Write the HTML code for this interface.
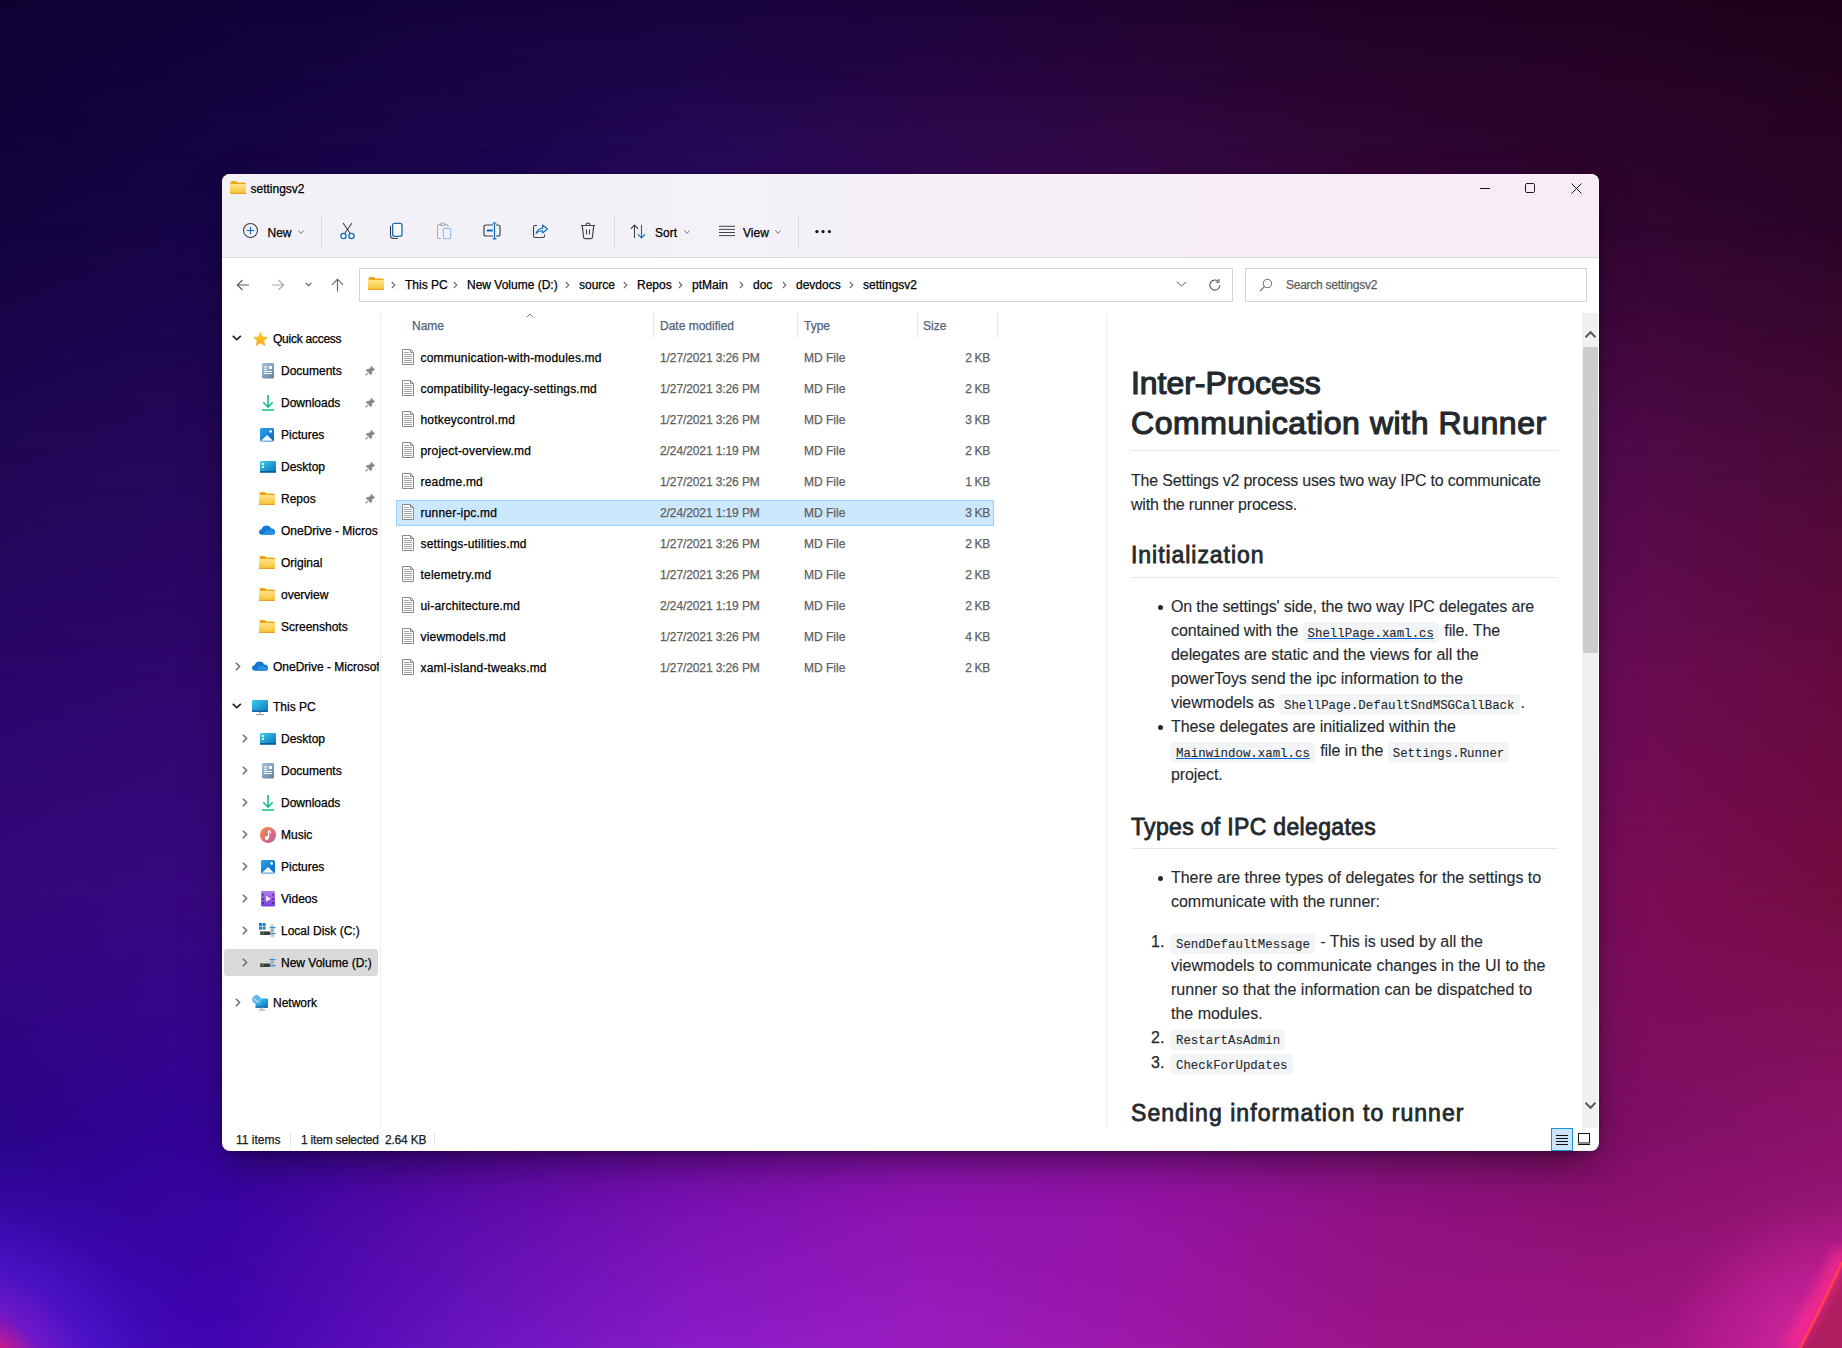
<!DOCTYPE html>
<html><head><meta charset="utf-8">
<style>
*{margin:0;padding:0;box-sizing:border-box}
html,body{width:1842px;height:1348px;overflow:hidden;background:#1a0440}
body{position:relative;font-family:"Liberation Sans",sans-serif;font-size:12px;color:#000}
.abs{position:absolute}
#bg{position:absolute;left:0;top:0;width:1842px;height:1348px;overflow:hidden}
.bgl{position:absolute;left:0;top:0;width:1842px;height:1348px}
#win{position:absolute;left:222px;top:174px;width:1377px;height:977px;border-radius:8px;overflow:hidden;background:#fff;box-shadow:0 1px 4px rgba(0,0,0,.25),0 18px 36px -8px rgba(0,0,0,.5)}
.t{position:absolute;white-space:nowrap;line-height:1;-webkit-text-stroke:0.25px currentColor}
svg{position:absolute;overflow:visible}
</style></head><body>
<div id="bg">
<div class="bgl" style="background:linear-gradient(90deg,#0e0232 0px,#110338 230px,#14043e 460px,#18043e 691px,#1c033a 921px,#1f0330 1151px,#200326 1382px,#210220 1612px,#20021c 1842px)"></div>
<div class="bgl" style="background:linear-gradient(90deg,#130440 0px,#17054a 230px,#1e0654 460px,#2a0a62 691px,#360a58 921px,#3c0a4c 1151px,#38063a 1382px,#320532 1612px,#2c0428 1842px);-webkit-mask-image:linear-gradient(180deg,transparent 0px,#000 225px);mask-image:linear-gradient(180deg,transparent 0px,#000 225px)"></div>
<div class="bgl" style="background:linear-gradient(90deg,#200654 0px,#26065c 230px,#2a0662 460px,#300a60 691px,#380a58 921px,#420a4e 1151px,#480a4a 1382px,#500a4c 1612px,#480a34 1842px);-webkit-mask-image:linear-gradient(180deg,transparent 225px,#000 449px);mask-image:linear-gradient(180deg,transparent 225px,#000 449px)"></div>
<div class="bgl" style="background:linear-gradient(90deg,#2a066a 0px,#30076e 230px,#34076e 460px,#3a086a 691px,#460a62 921px,#520c58 1151px,#5e0c58 1382px,#6a0c56 1612px,#640a3e 1842px);-webkit-mask-image:linear-gradient(180deg,transparent 449px,#000 674px);mask-image:linear-gradient(180deg,transparent 449px,#000 674px)"></div>
<div class="bgl" style="background:linear-gradient(90deg,#34087c 0px,#3a0882 230px,#3e0882 460px,#44087a 691px,#560a74 921px,#640c68 1151px,#720c60 1382px,#7c0c5a 1612px,#740c40 1842px);-webkit-mask-image:linear-gradient(180deg,transparent 674px,#000 899px);mask-image:linear-gradient(180deg,transparent 674px,#000 899px)"></div>
<div class="bgl" style="background:linear-gradient(90deg,#2c0488 0px,#34049a 230px,#52069c 460px,#700aa4 691px,#8810aa 921px,#8e10a0 1151px,#86107e 1382px,#7e0e64 1612px,#8a1268 1842px);-webkit-mask-image:linear-gradient(180deg,transparent 899px,#000 1123px);mask-image:linear-gradient(180deg,transparent 899px,#000 1123px)"></div>
<div class="bgl" style="background:linear-gradient(90deg,#3008b0 0px,#4404b0 230px,#6814c0 460px,#8a1cc8 691px,#9a1cc0 921px,#9c18a8 1151px,#9c1488 1382px,#a01484 1612px,#a81884 1842px);-webkit-mask-image:linear-gradient(180deg,transparent 1123px,#000 1348px);mask-image:linear-gradient(180deg,transparent 1123px,#000 1348px)"></div>
<div class="bgl" style="background:radial-gradient(circle at -40px 1400px,#f02070 0px,rgba(230,30,120,.9) 60px,rgba(140,30,210,.7) 95px,rgba(100,30,230,.45) 140px,rgba(90,20,220,.15) 200px,rgba(80,10,200,0) 260px)"></div>
<div class="bgl" style="background:radial-gradient(ellipse 180px 150px at 1842px 1348px,rgba(240,50,170,.8) 0%,rgba(220,40,170,.45) 50%,rgba(200,30,150,0) 100%)"></div>
<svg class="bgl" width="1842" height="1348" style="position:absolute;left:0;top:0"><defs><filter id="sb" x="-50%" y="-50%" width="200%" height="200%"><feGaussianBlur stdDeviation="6"/></filter></defs><path d="M1842 1262 Q1825 1300 1800 1348 L1842 1348 Z" fill="#b01e62"/><path d="M1842 1250 Q1822 1298 1790 1348" fill="none" stroke="#ff2a8a" stroke-width="14" filter="url(#sb)" opacity=".8"/><path d="M1842 1262 Q1825 1300 1800 1348" fill="none" stroke="#ff3a5c" stroke-width="3"/></svg>
</div>
<div id="win">
<div class="abs" style="left:0px;top:0px;width:1377px;height:83px;background:linear-gradient(90deg,#f3f1f8 0%,#f3f1f8 30%,#f5eff7 55%,#f7edf6 80%,#f8ecf6 100%)"></div>
<div class="abs" style="left:0px;top:83px;width:1377px;height:1px;background:#dedae2"></div>
<svg style="left:8px;top:7px" width="16" height="13" viewBox="0 0 16 13"><defs><linearGradient id="fg230181" x1="0" y1="0" x2="0" y2="1"><stop offset="0" stop-color="#ffe38a"/><stop offset="1" stop-color="#f8c233"/></linearGradient></defs>
<path d="M0.5 1.5 Q0.5 0 2 0 L6 0 L7.5 1.5 L14.5 1.5 Q16 1.5 16 3 L16 4 L0.5 4 Z" fill="#eaa71a"/>
<rect x="0" y="3" width="16" height="10" rx="1.2" fill="url(#fg230181)"/>
<rect x="0" y="11.8" width="16" height="1.2" rx="0.6" fill="#e6a41c"/></svg>
<div class="t" style="left:28.50px;top:9.34px;font-size:12px;color:#000;font-weight:normal;font-family:'Liberation Sans',sans-serif;">settingsv2</div>
<svg style="left:1257px;top:9px" width="120" height="12" viewBox="0 0 120 12"><line x1="1" y1="5.5" x2="11" y2="5.5" stroke="#1a1a1a" stroke-width="1"/>
<rect x="46.5" y="0.5" width="9" height="9" rx="1.2" fill="none" stroke="#1a1a1a" stroke-width="1"/>
<path d="M92.5 0.5 L102.5 10.5 M102.5 0.5 L92.5 10.5" stroke="#1a1a1a" stroke-width="1"/></svg>
<svg style="left:21px;top:49px" width="16" height="16" viewBox="0 0 16 16"><circle cx="7.5" cy="7.5" r="7" fill="none" stroke="#424242" stroke-width="1.1"/><path d="M7.5 3.8 V11.2 M3.8 7.5 H11.2" stroke="#0f6cbd" stroke-width="1.2"/></svg>
<div class="t" style="left:45.50px;top:52.84px;font-size:12px;color:#000;font-weight:normal;font-family:'Liberation Sans',sans-serif;">New</div>
<svg style="left:76px;top:55.5px" width="6" height="4" viewBox="0 0 6 4"><path d="M0.5 0.5 L3.0 3.5 L5.5 0.5" fill="none" stroke="#7a7a7a" stroke-width="1"/></svg>
<div class="abs" style="left:99px;top:41px;width:1px;height:32px;background:#dcd9e0"></div>
<svg style="left:118px;top:49px" width="16" height="17" viewBox="0 0 16 17"><path d="M3 0 L10 10 M12 0 L5 10" stroke="#424242" stroke-width="1.1" fill="none"/><circle cx="3.5" cy="13" r="2.6" fill="none" stroke="#0f6cbd" stroke-width="1.3"/><circle cx="11.5" cy="13" r="2.6" fill="none" stroke="#0f6cbd" stroke-width="1.3"/></svg>
<svg style="left:167px;top:48px" width="15" height="18" viewBox="0 0 15 18"><path d="M1.5 4 V13.5 Q1.5 16.5 4.5 16.5 H9" fill="none" stroke="#424242" stroke-width="1.1"/><rect x="3.6" y="1.3" width="9.4" height="13" rx="2" fill="#fafafa" stroke="#0f6cbd" stroke-width="1.3"/></svg>
<svg style="left:214px;top:48px" width="16" height="18" viewBox="0 0 16 18"><path d="M6 2.5 H3 Q1.5 2.5 1.5 4 V15 Q1.5 16.5 3 16.5 H5" fill="none" stroke="#a8a8a8" stroke-width="1"/><path d="M8 2.5 H10.5 Q12 2.5 12 4 V5" fill="none" stroke="#a8a8a8" stroke-width="1"/><rect x="4" y="1" width="5" height="2.6" rx="1.2" fill="none" stroke="#a8a8a8" stroke-width="1"/><rect x="7.3" y="6.4" width="7.4" height="10.4" rx="1.3" fill="none" stroke="#8cbef0" stroke-width="1.1"/></svg>
<svg style="left:261px;top:48px" width="19" height="18" viewBox="0 0 19 18"><path d="M10 3 H3 Q1 3 1 5 V12 Q1 14 3 14 H10 M13 3 H15 Q17 3 17 5 V12 Q17 14 15 14 H13" fill="none" stroke="#424242" stroke-width="1.2"/><path d="M3.8 8.5 H9.8" stroke="#0f6cbd" stroke-width="1.8"/><path d="M11.5 1 V16.8 M9.6 1 H13.4 M9.6 16.8 H13.4" stroke="#0f6cbd" stroke-width="1.2" fill="none"/></svg>
<svg style="left:310px;top:49px" width="17" height="16" viewBox="0 0 17 16"><path d="M5 2.5 H3 Q1.5 2.5 1.5 4 V13 Q1.5 14.5 3 14.5 H11 Q12.5 14.5 12.5 13 V11.5" fill="none" stroke="#424242" stroke-width="1.1"/><path d="M4 10.5 Q5.5 5.5 10.5 5.5 V2 L15.5 6 L10.5 10 V7.8 Q6.5 7.5 4 10.5 Z" fill="none" stroke="#0f6cbd" stroke-width="1.1" stroke-linejoin="round"/></svg>
<svg style="left:358px;top:48px" width="16" height="18" viewBox="0 0 16 18"><path d="M1 3.5 H15" stroke="#424242" stroke-width="1.2"/><path d="M6 3.2 Q6 1 8 1 Q10 1 10 3.2" fill="none" stroke="#424242" stroke-width="1.1"/><path d="M2.3 4 L3.5 15 Q3.7 16.7 5.3 16.7 H10.7 Q12.3 16.7 12.5 15 L13.7 4" fill="none" stroke="#424242" stroke-width="1.2"/><path d="M6.5 7.5 V12.5 M9.5 7.5 V12.5" stroke="#424242" stroke-width="1.1"/></svg>
<div class="abs" style="left:392px;top:41px;width:1px;height:32px;background:#dcd9e0"></div>
<svg style="left:408px;top:50px" width="18" height="15" viewBox="0 0 18 15"><path d="M4.5 14 V1 M0.8 4.8 L4.5 1 L8.2 4.8" fill="none" stroke="#424242" stroke-width="1.1"/><path d="M11.5 1 V14 M7.8 10.2 L11.5 14 L15.2 10.2" fill="none" stroke="#0f6cbd" stroke-width="1.1"/></svg>
<div class="t" style="left:433.00px;top:52.84px;font-size:12px;color:#000;font-weight:normal;font-family:'Liberation Sans',sans-serif;">Sort</div>
<svg style="left:462px;top:55.5px" width="6" height="4" viewBox="0 0 6 4"><path d="M0.5 0.5 L3.0 3.5 L5.5 0.5" fill="none" stroke="#7a7a7a" stroke-width="1"/></svg>
<svg style="left:497px;top:51px" width="17" height="12" viewBox="0 0 17 12"><path d="M0 1.3 H16 M0 4.4 H16 M0 7.5 H16 M0 10.6 H16" stroke="#424242" stroke-width="1"/></svg>
<div class="t" style="left:521.00px;top:52.84px;font-size:12px;color:#000;font-weight:normal;font-family:'Liberation Sans',sans-serif;">View</div>
<svg style="left:553px;top:55.5px" width="6" height="4" viewBox="0 0 6 4"><path d="M0.5 0.5 L3.0 3.5 L5.5 0.5" fill="none" stroke="#7a7a7a" stroke-width="1"/></svg>
<div class="abs" style="left:576px;top:41px;width:1px;height:32px;background:#dcd9e0"></div>
<svg style="left:592px;top:55px" width="18" height="5" viewBox="0 0 18 5"><circle cx="2.9" cy="2.6" r="1.6" fill="#111"/><circle cx="9" cy="2.6" r="1.6" fill="#111"/><circle cx="15.4" cy="2.6" r="1.6" fill="#111"/></svg>
<svg style="left:14px;top:105px" width="14" height="12" viewBox="0 0 14 12"><path d="M13 6 H1.5 M6.5 1 L1.3 6 L6.5 11" fill="none" stroke="#5c5c5c" stroke-width="1.1"/></svg>
<svg style="left:49px;top:105px" width="14" height="12" viewBox="0 0 14 12"><path d="M1 6 H12.5 M7.5 1 L12.7 6 L7.5 11" fill="none" stroke="#a6a6a6" stroke-width="1.1"/></svg>
<svg style="left:83px;top:108px" width="7" height="5" viewBox="0 0 7 5"><path d="M0.7 0.8 L3.5 3.6 L6.3 0.8" fill="none" stroke="#5c5c5c" stroke-width="1.1"/></svg>
<svg style="left:109px;top:104px" width="13" height="14" viewBox="0 0 13 14"><path d="M6.5 13.5 V1.5 M1 6.8 L6.5 1.2 L12 6.8" fill="none" stroke="#5c5c5c" stroke-width="1.1"/></svg>
<div class="abs" style="left:137px;top:94px;width:874px;height:34px;border:1px solid #d4d4d4;background:#fff"></div>
<svg style="left:146px;top:103px" width="16" height="13" viewBox="0 0 16 13"><defs><linearGradient id="fg368277" x1="0" y1="0" x2="0" y2="1"><stop offset="0" stop-color="#ffe38a"/><stop offset="1" stop-color="#f8c233"/></linearGradient></defs>
<path d="M0.5 1.5 Q0.5 0 2 0 L6 0 L7.5 1.5 L14.5 1.5 Q16 1.5 16 3 L16 4 L0.5 4 Z" fill="#eaa71a"/>
<rect x="0" y="3" width="16" height="10" rx="1.2" fill="url(#fg368277)"/>
<rect x="0" y="11.8" width="16" height="1.2" rx="0.6" fill="#e6a41c"/></svg>
<svg style="left:169px;top:107px" width="5" height="8" viewBox="0 0 5 8"><path d="M0.8 0.8 L3.8 4 L0.8 7.2" fill="none" stroke="#606060" stroke-width="1.1"/></svg>
<svg style="left:231px;top:107px" width="5" height="8" viewBox="0 0 5 8"><path d="M0.8 0.8 L3.8 4 L0.8 7.2" fill="none" stroke="#606060" stroke-width="1.1"/></svg>
<svg style="left:343px;top:107px" width="5" height="8" viewBox="0 0 5 8"><path d="M0.8 0.8 L3.8 4 L0.8 7.2" fill="none" stroke="#606060" stroke-width="1.1"/></svg>
<svg style="left:401px;top:107px" width="5" height="8" viewBox="0 0 5 8"><path d="M0.8 0.8 L3.8 4 L0.8 7.2" fill="none" stroke="#606060" stroke-width="1.1"/></svg>
<svg style="left:456px;top:107px" width="5" height="8" viewBox="0 0 5 8"><path d="M0.8 0.8 L3.8 4 L0.8 7.2" fill="none" stroke="#606060" stroke-width="1.1"/></svg>
<svg style="left:517px;top:107px" width="5" height="8" viewBox="0 0 5 8"><path d="M0.8 0.8 L3.8 4 L0.8 7.2" fill="none" stroke="#606060" stroke-width="1.1"/></svg>
<svg style="left:560px;top:107px" width="5" height="8" viewBox="0 0 5 8"><path d="M0.8 0.8 L3.8 4 L0.8 7.2" fill="none" stroke="#606060" stroke-width="1.1"/></svg>
<svg style="left:627px;top:107px" width="5" height="8" viewBox="0 0 5 8"><path d="M0.8 0.8 L3.8 4 L0.8 7.2" fill="none" stroke="#606060" stroke-width="1.1"/></svg>
<div class="t" style="left:183.00px;top:104.84px;font-size:12px;color:#000;font-weight:normal;font-family:'Liberation Sans',sans-serif;">This PC</div>
<div class="t" style="left:245.00px;top:104.84px;font-size:12px;color:#000;font-weight:normal;font-family:'Liberation Sans',sans-serif;">New Volume (D:)</div>
<div class="t" style="left:357.00px;top:104.84px;font-size:12px;color:#000;font-weight:normal;font-family:'Liberation Sans',sans-serif;">source</div>
<div class="t" style="left:415.00px;top:104.84px;font-size:12px;color:#000;font-weight:normal;font-family:'Liberation Sans',sans-serif;">Repos</div>
<div class="t" style="left:470.00px;top:104.84px;font-size:12px;color:#000;font-weight:normal;font-family:'Liberation Sans',sans-serif;">ptMain</div>
<div class="t" style="left:531.00px;top:104.84px;font-size:12px;color:#000;font-weight:normal;font-family:'Liberation Sans',sans-serif;">doc</div>
<div class="t" style="left:574.00px;top:104.84px;font-size:12px;color:#000;font-weight:normal;font-family:'Liberation Sans',sans-serif;">devdocs</div>
<div class="t" style="left:641.00px;top:104.84px;font-size:12px;color:#000;font-weight:normal;font-family:'Liberation Sans',sans-serif;">settingsv2</div>
<svg style="left:954px;top:107px" width="11" height="6" viewBox="0 0 11 6"><path d="M0.8 0.8 L5.5 5 L10.2 0.8" fill="none" stroke="#5c5c5c" stroke-width="1"/></svg>
<svg style="left:986px;top:104px" width="14" height="14" viewBox="0 0 14 14"><path d="M11.8 7.2 A5 5 0 1 1 10.2 3.4" fill="none" stroke="#5c5c5c" stroke-width="1.1"/><path d="M11 1 V4.2 H7.8" fill="none" stroke="#5c5c5c" stroke-width="1.1"/></svg>
<div class="abs" style="left:1023px;top:94px;width:342px;height:34px;border:1px solid #d4d4d4;background:#fff"></div>
<svg style="left:1037px;top:104px" width="14" height="14" viewBox="0 0 14 14"><circle cx="8.5" cy="5.5" r="4.2" fill="none" stroke="#6e6e6e" stroke-width="1"/><path d="M5.5 8.5 L1 13" stroke="#6e6e6e" stroke-width="1.1"/></svg>
<div class="t" style="left:1064.00px;top:104.84px;font-size:12px;color:#5d5d5d;font-weight:normal;font-family:'Liberation Sans',sans-serif;letter-spacing:-0.25px;">Search settingsv2</div>
<div class="abs" style="left:158px;top:139px;width:1px;height:815px;background:#efefef"></div>
<div class="abs" style="left:2px;top:775px;width:154px;height:27px;background:#dadada;border-radius:3px"></div>
<svg style="left:10px;top:161px" width="10" height="6" viewBox="0 0 10 6"><path d="M0.8 0.8 L4.8 4.6 L8.8 0.8" fill="none" stroke="#1e1e1e" stroke-width="1.6"/></svg>
<svg style="left:31px;top:158px" width="15" height="15" viewBox="0 0 15 15"><defs><linearGradient id="sg" x1="0" y1="0" x2="0" y2="1"><stop offset="0" stop-color="#ffd21a"/><stop offset="1" stop-color="#f7a616"/></linearGradient></defs><path d="M7.5 0.3 L9.6 5 L14.6 5.3 L10.8 8.7 L12 13.8 L7.5 11.1 L3 13.8 L4.2 8.7 L0.4 5.3 L5.4 5 Z" fill="url(#sg)" stroke="#f5a623" stroke-width="0.5" stroke-linejoin="round"/></svg>
<div class="t" style="left:51.00px;top:158.84px;font-size:12px;color:#000;font-weight:normal;font-family:'Liberation Sans',sans-serif;letter-spacing:-0.25px;">Quick access</div>
<svg style="left:40px;top:189px" width="12" height="16" viewBox="0 0 12 16"><defs><linearGradient id="dg" x1="0" y1="0" x2="1" y2="1"><stop offset="0" stop-color="#a9bfd8"/><stop offset="1" stop-color="#5f82a8"/></linearGradient></defs><rect x="0" y="0" width="12" height="15.6" rx="1.3" fill="url(#dg)"/><path d="M2 4 H5.6 M2 6.2 H5.6 M2 8.4 H10 M2 10.5 H10" stroke="#fff" stroke-width="1"/><rect x="7" y="3" width="3" height="3" fill="#fff"/></svg>
<div class="t" style="left:59.00px;top:190.84px;font-size:12px;color:#000;font-weight:normal;font-family:'Liberation Sans',sans-serif;">Documents</div>
<svg style="left:143px;top:191px" width="11" height="11" viewBox="0 0 11 11"><path d="M6.3 0.8 L10.2 4.7 L8.8 5.2 L6.9 7.1 L7 9 L5.8 10 L1 5.2 L2 4 L3.9 4.1 L5.8 2.2 Z" fill="#8a8a8a"/><path d="M3.2 7.8 L0.6 10.4" stroke="#8a8a8a" stroke-width="1.2"/></svg>
<svg style="left:40px;top:221px" width="12" height="16" viewBox="0 0 12 16"><path d="M6 0 V11.5 M1.3 7.3 L6 12 L10.7 7.3" fill="none" stroke="#1fb992" stroke-width="1.6"/><rect x="0" y="14.2" width="12" height="1.6" fill="#20c48f"/></svg>
<div class="t" style="left:59.00px;top:222.84px;font-size:12px;color:#000;font-weight:normal;font-family:'Liberation Sans',sans-serif;">Downloads</div>
<svg style="left:143px;top:223px" width="11" height="11" viewBox="0 0 11 11"><path d="M6.3 0.8 L10.2 4.7 L8.8 5.2 L6.9 7.1 L7 9 L5.8 10 L1 5.2 L2 4 L3.9 4.1 L5.8 2.2 Z" fill="#8a8a8a"/><path d="M3.2 7.8 L0.6 10.4" stroke="#8a8a8a" stroke-width="1.2"/></svg>
<svg style="left:38px;top:254px" width="14" height="14" viewBox="0 0 14 14"><defs><linearGradient id="pg" x1="0" y1="0" x2="1" y2="1"><stop offset="0" stop-color="#2aa4ea"/><stop offset="1" stop-color="#0a64c4"/></linearGradient></defs><rect x="0" y="0" width="14" height="13.6" rx="1.5" fill="url(#pg)"/><path d="M1 12.8 L7 7 L13 12.8 Z" fill="#eef6ff"/><circle cx="10.6" cy="3.4" r="1.3" fill="#fff"/></svg>
<div class="t" style="left:59.00px;top:254.84px;font-size:12px;color:#000;font-weight:normal;font-family:'Liberation Sans',sans-serif;">Pictures</div>
<svg style="left:143px;top:255px" width="11" height="11" viewBox="0 0 11 11"><path d="M6.3 0.8 L10.2 4.7 L8.8 5.2 L6.9 7.1 L7 9 L5.8 10 L1 5.2 L2 4 L3.9 4.1 L5.8 2.2 Z" fill="#8a8a8a"/><path d="M3.2 7.8 L0.6 10.4" stroke="#8a8a8a" stroke-width="1.2"/></svg>
<svg style="left:38px;top:287px" width="16" height="12" viewBox="0 0 16 12"><defs><linearGradient id="kg" x1="0" y1="0" x2="1" y2="1"><stop offset="0" stop-color="#3bd0ee"/><stop offset="1" stop-color="#0b6fc2"/></linearGradient></defs><rect x="0" y="0" width="16" height="11.4" rx="1.2" fill="url(#kg)"/><rect x="0" y="10.2" width="16" height="1.4" fill="#0a4f8f"/><rect x="2" y="2" width="2" height="2" fill="#fff"/><rect x="2" y="5" width="2" height="2" fill="#fff"/></svg>
<div class="t" style="left:59.00px;top:286.84px;font-size:12px;color:#000;font-weight:normal;font-family:'Liberation Sans',sans-serif;">Desktop</div>
<svg style="left:143px;top:287px" width="11" height="11" viewBox="0 0 11 11"><path d="M6.3 0.8 L10.2 4.7 L8.8 5.2 L6.9 7.1 L7 9 L5.8 10 L1 5.2 L2 4 L3.9 4.1 L5.8 2.2 Z" fill="#8a8a8a"/><path d="M3.2 7.8 L0.6 10.4" stroke="#8a8a8a" stroke-width="1.2"/></svg>
<svg style="left:37px;top:318px" width="16" height="13" viewBox="0 0 16 13"><defs><linearGradient id="fg259492" x1="0" y1="0" x2="0" y2="1"><stop offset="0" stop-color="#ffe38a"/><stop offset="1" stop-color="#f8c233"/></linearGradient></defs>
<path d="M0.5 1.5 Q0.5 0 2 0 L6 0 L7.5 1.5 L14.5 1.5 Q16 1.5 16 3 L16 4 L0.5 4 Z" fill="#eaa71a"/>
<rect x="0" y="3" width="16" height="10" rx="1.2" fill="url(#fg259492)"/>
<rect x="0" y="11.8" width="16" height="1.2" rx="0.6" fill="#e6a41c"/></svg>
<div class="t" style="left:59.00px;top:318.84px;font-size:12px;color:#000;font-weight:normal;font-family:'Liberation Sans',sans-serif;">Repos</div>
<svg style="left:143px;top:319px" width="11" height="11" viewBox="0 0 11 11"><path d="M6.3 0.8 L10.2 4.7 L8.8 5.2 L6.9 7.1 L7 9 L5.8 10 L1 5.2 L2 4 L3.9 4.1 L5.8 2.2 Z" fill="#8a8a8a"/><path d="M3.2 7.8 L0.6 10.4" stroke="#8a8a8a" stroke-width="1.2"/></svg>
<svg style="left:37px;top:351px" width="16" height="10" viewBox="0 0 16 10"><path d="M3.5 9.8 Q0 9.8 0 7 Q0 4.6 2.6 4.3 Q3.6 0.5 7.6 0.5 Q10.8 0.5 12.2 3.4 Q16 3.6 16 6.8 Q16 9.8 12.8 9.8 Z" fill="#0f78d4"/><path d="M5.5 9.8 Q4.5 6 8.5 5 Q11 4.4 13 6 Q16 6.2 16 7.8 Q16 9.8 12.8 9.8 Z" fill="#2b8fe0"/></svg>
<div class="t" style="left:59.00px;top:350.84px;font-size:12px;color:#000;font-weight:normal;font-family:'Liberation Sans',sans-serif;width:97px;overflow:hidden;">OneDrive - Microsoft</div>
<svg style="left:37px;top:382px" width="16" height="13" viewBox="0 0 16 13"><defs><linearGradient id="fg259556" x1="0" y1="0" x2="0" y2="1"><stop offset="0" stop-color="#ffe38a"/><stop offset="1" stop-color="#f8c233"/></linearGradient></defs>
<path d="M0.5 1.5 Q0.5 0 2 0 L6 0 L7.5 1.5 L14.5 1.5 Q16 1.5 16 3 L16 4 L0.5 4 Z" fill="#eaa71a"/>
<rect x="0" y="3" width="16" height="10" rx="1.2" fill="url(#fg259556)"/>
<rect x="0" y="11.8" width="16" height="1.2" rx="0.6" fill="#e6a41c"/></svg>
<div class="t" style="left:59.00px;top:382.84px;font-size:12px;color:#000;font-weight:normal;font-family:'Liberation Sans',sans-serif;">Original</div>
<svg style="left:37px;top:414px" width="16" height="13" viewBox="0 0 16 13"><defs><linearGradient id="fg259588" x1="0" y1="0" x2="0" y2="1"><stop offset="0" stop-color="#ffe38a"/><stop offset="1" stop-color="#f8c233"/></linearGradient></defs>
<path d="M0.5 1.5 Q0.5 0 2 0 L6 0 L7.5 1.5 L14.5 1.5 Q16 1.5 16 3 L16 4 L0.5 4 Z" fill="#eaa71a"/>
<rect x="0" y="3" width="16" height="10" rx="1.2" fill="url(#fg259588)"/>
<rect x="0" y="11.8" width="16" height="1.2" rx="0.6" fill="#e6a41c"/></svg>
<div class="t" style="left:59.00px;top:414.84px;font-size:12px;color:#000;font-weight:normal;font-family:'Liberation Sans',sans-serif;">overview</div>
<svg style="left:37px;top:446px" width="16" height="13" viewBox="0 0 16 13"><defs><linearGradient id="fg259620" x1="0" y1="0" x2="0" y2="1"><stop offset="0" stop-color="#ffe38a"/><stop offset="1" stop-color="#f8c233"/></linearGradient></defs>
<path d="M0.5 1.5 Q0.5 0 2 0 L6 0 L7.5 1.5 L14.5 1.5 Q16 1.5 16 3 L16 4 L0.5 4 Z" fill="#eaa71a"/>
<rect x="0" y="3" width="16" height="10" rx="1.2" fill="url(#fg259620)"/>
<rect x="0" y="11.8" width="16" height="1.2" rx="0.6" fill="#e6a41c"/></svg>
<div class="t" style="left:59.00px;top:446.84px;font-size:12px;color:#000;font-weight:normal;font-family:'Liberation Sans',sans-serif;">Screenshots</div>
<svg style="left:13px;top:488px" width="6" height="9" viewBox="0 0 6 9"><path d="M0.8 0.8 L4.6 4.5 L0.8 8.2" fill="none" stroke="#6e6e6e" stroke-width="1.5"/></svg>
<svg style="left:30px;top:487px" width="16" height="10" viewBox="0 0 16 10"><path d="M3.5 9.8 Q0 9.8 0 7 Q0 4.6 2.6 4.3 Q3.6 0.5 7.6 0.5 Q10.8 0.5 12.2 3.4 Q16 3.6 16 6.8 Q16 9.8 12.8 9.8 Z" fill="#0f78d4"/><path d="M5.5 9.8 Q4.5 6 8.5 5 Q11 4.4 13 6 Q16 6.2 16 7.8 Q16 9.8 12.8 9.8 Z" fill="#2b8fe0"/></svg>
<div class="t" style="left:51.00px;top:486.84px;font-size:12px;color:#000;font-weight:normal;font-family:'Liberation Sans',sans-serif;width:106px;overflow:hidden;">OneDrive - Microsoft</div>
<svg style="left:10px;top:529px" width="10" height="6" viewBox="0 0 10 6"><path d="M0.8 0.8 L4.8 4.6 L8.8 0.8" fill="none" stroke="#1e1e1e" stroke-width="1.6"/></svg>
<svg style="left:30px;top:526px" width="16" height="16" viewBox="0 0 16 16"><defs><linearGradient id="cg" x1="0" y1="0" x2="1" y2="1"><stop offset="0" stop-color="#3bd3ee"/><stop offset="1" stop-color="#0d70c4"/></linearGradient></defs><rect x="0" y="0" width="16" height="11.8" rx="1.2" fill="url(#cg)"/><rect x="0" y="10.6" width="16" height="1.3" fill="#0b5a9a"/><rect x="7.3" y="12" width="1.4" height="2.2" fill="#9aa9b8"/><rect x="4" y="14" width="8" height="1.2" fill="#9aa9b8"/></svg>
<div class="t" style="left:51.00px;top:526.84px;font-size:12px;color:#000;font-weight:normal;font-family:'Liberation Sans',sans-serif;">This PC</div>
<svg style="left:20px;top:560px" width="6" height="9" viewBox="0 0 6 9"><path d="M0.8 0.8 L4.6 4.5 L0.8 8.2" fill="none" stroke="#6e6e6e" stroke-width="1.5"/></svg>
<svg style="left:38px;top:559px" width="16" height="12" viewBox="0 0 16 12"><defs><linearGradient id="kg" x1="0" y1="0" x2="1" y2="1"><stop offset="0" stop-color="#3bd0ee"/><stop offset="1" stop-color="#0b6fc2"/></linearGradient></defs><rect x="0" y="0" width="16" height="11.4" rx="1.2" fill="url(#kg)"/><rect x="0" y="10.2" width="16" height="1.4" fill="#0a4f8f"/><rect x="2" y="2" width="2" height="2" fill="#fff"/><rect x="2" y="5" width="2" height="2" fill="#fff"/></svg>
<div class="t" style="left:59.00px;top:558.84px;font-size:12px;color:#000;font-weight:normal;font-family:'Liberation Sans',sans-serif;">Desktop</div>
<svg style="left:20px;top:592px" width="6" height="9" viewBox="0 0 6 9"><path d="M0.8 0.8 L4.6 4.5 L0.8 8.2" fill="none" stroke="#6e6e6e" stroke-width="1.5"/></svg>
<svg style="left:40px;top:589px" width="12" height="16" viewBox="0 0 12 16"><defs><linearGradient id="dg" x1="0" y1="0" x2="1" y2="1"><stop offset="0" stop-color="#a9bfd8"/><stop offset="1" stop-color="#5f82a8"/></linearGradient></defs><rect x="0" y="0" width="12" height="15.6" rx="1.3" fill="url(#dg)"/><path d="M2 4 H5.6 M2 6.2 H5.6 M2 8.4 H10 M2 10.5 H10" stroke="#fff" stroke-width="1"/><rect x="7" y="3" width="3" height="3" fill="#fff"/></svg>
<div class="t" style="left:59.00px;top:590.84px;font-size:12px;color:#000;font-weight:normal;font-family:'Liberation Sans',sans-serif;">Documents</div>
<svg style="left:20px;top:624px" width="6" height="9" viewBox="0 0 6 9"><path d="M0.8 0.8 L4.6 4.5 L0.8 8.2" fill="none" stroke="#6e6e6e" stroke-width="1.5"/></svg>
<svg style="left:40px;top:621px" width="12" height="16" viewBox="0 0 12 16"><path d="M6 0 V11.5 M1.3 7.3 L6 12 L10.7 7.3" fill="none" stroke="#1fb992" stroke-width="1.6"/><rect x="0" y="14.2" width="12" height="1.6" fill="#20c48f"/></svg>
<div class="t" style="left:59.00px;top:622.84px;font-size:12px;color:#000;font-weight:normal;font-family:'Liberation Sans',sans-serif;">Downloads</div>
<svg style="left:20px;top:656px" width="6" height="9" viewBox="0 0 6 9"><path d="M0.8 0.8 L4.6 4.5 L0.8 8.2" fill="none" stroke="#6e6e6e" stroke-width="1.5"/></svg>
<svg style="left:38px;top:653px" width="16" height="16" viewBox="0 0 16 16"><defs><linearGradient id="mg" x1="0" y1="0" x2="1" y2="1"><stop offset="0" stop-color="#f08a4a"/><stop offset="0.6" stop-color="#e06c7a"/><stop offset="1" stop-color="#9a5ab8"/></linearGradient></defs><circle cx="8" cy="8" r="8" fill="url(#mg)"/><path d="M8.6 3.5 V10.8" stroke="#fff" stroke-width="1.4"/><path d="M8.6 3.5 Q10.6 4.3 10.6 6" fill="none" stroke="#fff" stroke-width="1.3"/><circle cx="6.8" cy="11" r="1.9" fill="#fff"/></svg>
<div class="t" style="left:59.00px;top:654.84px;font-size:12px;color:#000;font-weight:normal;font-family:'Liberation Sans',sans-serif;">Music</div>
<svg style="left:20px;top:688px" width="6" height="9" viewBox="0 0 6 9"><path d="M0.8 0.8 L4.6 4.5 L0.8 8.2" fill="none" stroke="#6e6e6e" stroke-width="1.5"/></svg>
<svg style="left:39px;top:686px" width="14" height="14" viewBox="0 0 14 14"><defs><linearGradient id="pg" x1="0" y1="0" x2="1" y2="1"><stop offset="0" stop-color="#2aa4ea"/><stop offset="1" stop-color="#0a64c4"/></linearGradient></defs><rect x="0" y="0" width="14" height="13.6" rx="1.5" fill="url(#pg)"/><path d="M1 12.8 L7 7 L13 12.8 Z" fill="#eef6ff"/><circle cx="10.6" cy="3.4" r="1.3" fill="#fff"/></svg>
<div class="t" style="left:59.00px;top:686.84px;font-size:12px;color:#000;font-weight:normal;font-family:'Liberation Sans',sans-serif;">Pictures</div>
<svg style="left:20px;top:720px" width="6" height="9" viewBox="0 0 6 9"><path d="M0.8 0.8 L4.6 4.5 L0.8 8.2" fill="none" stroke="#6e6e6e" stroke-width="1.5"/></svg>
<svg style="left:39px;top:717px" width="14" height="16" viewBox="0 0 14 16"><defs><linearGradient id="vg" x1="0" y1="0" x2="0" y2="1"><stop offset="0" stop-color="#b27af0"/><stop offset="1" stop-color="#7a3ee0"/></linearGradient></defs><rect x="0" y="0" width="14" height="15.5" rx="1.4" fill="url(#vg)"/><g fill="#3a2a5a"><rect x="1.2" y="2.8" width="1.6" height="1.6"/><rect x="1.2" y="7" width="1.6" height="1.6"/><rect x="1.2" y="11.2" width="1.6" height="1.6"/><rect x="11.2" y="2.8" width="1.6" height="1.6"/><rect x="11.2" y="7" width="1.6" height="1.6"/><rect x="11.2" y="11.2" width="1.6" height="1.6"/></g><path d="M5 4.8 L10 7.8 L5 10.8 Z" fill="#f0eef5"/></svg>
<div class="t" style="left:59.00px;top:718.84px;font-size:12px;color:#000;font-weight:normal;font-family:'Liberation Sans',sans-serif;">Videos</div>
<svg style="left:20px;top:752px" width="6" height="9" viewBox="0 0 6 9"><path d="M0.8 0.8 L4.6 4.5 L0.8 8.2" fill="none" stroke="#6e6e6e" stroke-width="1.5"/></svg>
<svg style="left:37px;top:749px" width="17" height="16" viewBox="0 0 17 16"><g fill="#1a7fd8"><rect x="0" y="0" width="3" height="3"/><rect x="3.6" y="0" width="3" height="3"/><rect x="0" y="3.6" width="3" height="3"/><rect x="3.6" y="3.6" width="3" height="3"/></g><rect x="1.2" y="8" width="10" height="4" fill="#3b3b3b"/><rect x="1.2" y="8" width="10" height="1" fill="#8a8a8a"/><circle cx="4" cy="10.2" r="0.8" fill="#3cd63c"/><path d="M11.5 2 Q13.3 0.5 15 2 V14 Q13.3 15.5 11.5 14 Z" fill="#c9ced6"/><rect x="10.5" y="4" width="6" height="1.2" fill="#2d8ae0"/><rect x="10.5" y="10" width="6" height="1.2" fill="#2d8ae0"/><rect x="11.5" y="6" width="3.6" height="3" fill="#a7aeb8"/></svg>
<div class="t" style="left:59.00px;top:750.84px;font-size:12px;color:#000;font-weight:normal;font-family:'Liberation Sans',sans-serif;">Local Disk (C:)</div>
<svg style="left:20px;top:784px" width="6" height="9" viewBox="0 0 6 9"><path d="M0.8 0.8 L4.6 4.5 L0.8 8.2" fill="none" stroke="#6e6e6e" stroke-width="1.5"/></svg>
<svg style="left:37px;top:781px" width="17" height="16" viewBox="0 0 17 16"><path d="M2 8 L8 6 L10 8 Z" fill="#d8d8d8"/><rect x="1.2" y="8" width="10" height="4" fill="#3b3b3b"/><rect x="1.2" y="8" width="10" height="1" fill="#8a8a8a"/><circle cx="4" cy="10.2" r="0.8" fill="#3cd63c"/><path d="M11.5 2 Q13.3 0.5 15 2 V14 Q13.3 15.5 11.5 14 Z" fill="#c9ced6"/><rect x="10.5" y="4" width="6" height="1.2" fill="#2d8ae0"/><rect x="10.5" y="10" width="6" height="1.2" fill="#2d8ae0"/><rect x="11.5" y="6" width="3.6" height="3" fill="#a7aeb8"/></svg>
<div class="t" style="left:59.00px;top:782.84px;font-size:12px;color:#000;font-weight:normal;font-family:'Liberation Sans',sans-serif;">New Volume (D:)</div>
<svg style="left:13px;top:824px" width="6" height="9" viewBox="0 0 6 9"><path d="M0.8 0.8 L4.6 4.5 L0.8 8.2" fill="none" stroke="#6e6e6e" stroke-width="1.5"/></svg>
<svg style="left:30px;top:821px" width="16" height="16" viewBox="0 0 16 16"><defs><linearGradient id="ng" x1="0" y1="0" x2="1" y2="1"><stop offset="0" stop-color="#3bd3ee"/><stop offset="1" stop-color="#0d70c4"/></linearGradient></defs><rect x="3.5" y="3.5" width="12.5" height="9" rx="1" fill="url(#ng)"/><rect x="3.5" y="11.6" width="12.5" height="1.1" fill="#0b5a9a"/><rect x="9.2" y="12.6" width="1.2" height="2" fill="#9aa9b8"/><rect x="6.5" y="14.4" width="6.5" height="1.1" fill="#9aa9b8"/><circle cx="4.5" cy="4.5" r="4.4" fill="#5fb6e8"/><path d="M1.5 3 Q4 4 4 6 Q6 6 7.5 8" fill="none" stroke="#fff" stroke-width="0.9" opacity="0.8"/></svg>
<div class="t" style="left:51.00px;top:822.84px;font-size:12px;color:#000;font-weight:normal;font-family:'Liberation Sans',sans-serif;">Network</div>
<div class="t" style="left:190.00px;top:145.84px;font-size:12px;color:#4f617a;font-weight:normal;font-family:'Liberation Sans',sans-serif;">Name</div>
<svg style="left:304px;top:139px" width="8" height="5" viewBox="0 0 8 5"><path d="M0.8 4.2 L4 1 L7.2 4.2" fill="none" stroke="#808080" stroke-width="1"/></svg>
<div class="abs" style="left:431px;top:139px;width:1px;height:25px;background:#e5e5e5"></div>
<div class="abs" style="left:575px;top:139px;width:1px;height:25px;background:#e5e5e5"></div>
<div class="abs" style="left:695px;top:139px;width:1px;height:25px;background:#e5e5e5"></div>
<div class="abs" style="left:775px;top:139px;width:1px;height:25px;background:#e5e5e5"></div>
<div class="t" style="left:438.00px;top:145.84px;font-size:12px;color:#4f617a;font-weight:normal;font-family:'Liberation Sans',sans-serif;">Date modified</div>
<div class="t" style="left:582.00px;top:145.84px;font-size:12px;color:#4f617a;font-weight:normal;font-family:'Liberation Sans',sans-serif;">Type</div>
<div class="t" style="left:701.00px;top:145.84px;font-size:12px;color:#4f617a;font-weight:normal;font-family:'Liberation Sans',sans-serif;">Size</div>
<div class="abs" style="left:174px;top:326px;width:598px;height:26px;background:#cce8ff;border:1px solid #99d1ff"></div>
<svg style="left:179px;top:175px" width="14" height="17" viewBox="0 0 14 17"><path d="M1.5 0.5 H9.5 L12.5 3.5 V15.5 H1.5 Z" fill="#fff" stroke="#8a8a8a" stroke-width="1"/><path d="M9.5 0.5 V3.5 H12.5" fill="none" stroke="#8a8a8a" stroke-width="1"/><path d="M3 3.5 H8 M3 5.5 H11 M3 7.5 H11 M3 9.5 H11 M3 11.5 H11 M3 13.5 H11" stroke="#a6a6a6" stroke-width="1"/></svg>
<div class="t" style="left:198.50px;top:177.84px;font-size:12px;color:#000;font-weight:normal;font-family:'Liberation Sans',sans-serif;letter-spacing:0.2px;">communication-with-modules.md</div>
<div class="t" style="left:438.00px;top:177.84px;font-size:12px;color:#5f5f5f;font-weight:normal;font-family:'Liberation Sans',sans-serif;letter-spacing:-0.1px;">1/27/2021 3:26 PM</div>
<div class="t" style="left:582.00px;top:177.84px;font-size:12px;color:#5f5f5f;font-weight:normal;font-family:'Liberation Sans',sans-serif;">MD File</div>
<div class="t" style="left:718px;width:50px;text-align:right;top:177.84px;font-size:12px;letter-spacing:-0.3px;color:#5f5f5f">2 KB</div>
<svg style="left:179px;top:206px" width="14" height="17" viewBox="0 0 14 17"><path d="M1.5 0.5 H9.5 L12.5 3.5 V15.5 H1.5 Z" fill="#fff" stroke="#8a8a8a" stroke-width="1"/><path d="M9.5 0.5 V3.5 H12.5" fill="none" stroke="#8a8a8a" stroke-width="1"/><path d="M3 3.5 H8 M3 5.5 H11 M3 7.5 H11 M3 9.5 H11 M3 11.5 H11 M3 13.5 H11" stroke="#a6a6a6" stroke-width="1"/></svg>
<div class="t" style="left:198.50px;top:208.84px;font-size:12px;color:#000;font-weight:normal;font-family:'Liberation Sans',sans-serif;letter-spacing:0.2px;">compatibility-legacy-settings.md</div>
<div class="t" style="left:438.00px;top:208.84px;font-size:12px;color:#5f5f5f;font-weight:normal;font-family:'Liberation Sans',sans-serif;letter-spacing:-0.1px;">1/27/2021 3:26 PM</div>
<div class="t" style="left:582.00px;top:208.84px;font-size:12px;color:#5f5f5f;font-weight:normal;font-family:'Liberation Sans',sans-serif;">MD File</div>
<div class="t" style="left:718px;width:50px;text-align:right;top:208.84px;font-size:12px;letter-spacing:-0.3px;color:#5f5f5f">2 KB</div>
<svg style="left:179px;top:237px" width="14" height="17" viewBox="0 0 14 17"><path d="M1.5 0.5 H9.5 L12.5 3.5 V15.5 H1.5 Z" fill="#fff" stroke="#8a8a8a" stroke-width="1"/><path d="M9.5 0.5 V3.5 H12.5" fill="none" stroke="#8a8a8a" stroke-width="1"/><path d="M3 3.5 H8 M3 5.5 H11 M3 7.5 H11 M3 9.5 H11 M3 11.5 H11 M3 13.5 H11" stroke="#a6a6a6" stroke-width="1"/></svg>
<div class="t" style="left:198.50px;top:239.84px;font-size:12px;color:#000;font-weight:normal;font-family:'Liberation Sans',sans-serif;letter-spacing:0.2px;">hotkeycontrol.md</div>
<div class="t" style="left:438.00px;top:239.84px;font-size:12px;color:#5f5f5f;font-weight:normal;font-family:'Liberation Sans',sans-serif;letter-spacing:-0.1px;">1/27/2021 3:26 PM</div>
<div class="t" style="left:582.00px;top:239.84px;font-size:12px;color:#5f5f5f;font-weight:normal;font-family:'Liberation Sans',sans-serif;">MD File</div>
<div class="t" style="left:718px;width:50px;text-align:right;top:239.84px;font-size:12px;letter-spacing:-0.3px;color:#5f5f5f">3 KB</div>
<svg style="left:179px;top:268px" width="14" height="17" viewBox="0 0 14 17"><path d="M1.5 0.5 H9.5 L12.5 3.5 V15.5 H1.5 Z" fill="#fff" stroke="#8a8a8a" stroke-width="1"/><path d="M9.5 0.5 V3.5 H12.5" fill="none" stroke="#8a8a8a" stroke-width="1"/><path d="M3 3.5 H8 M3 5.5 H11 M3 7.5 H11 M3 9.5 H11 M3 11.5 H11 M3 13.5 H11" stroke="#a6a6a6" stroke-width="1"/></svg>
<div class="t" style="left:198.50px;top:270.84px;font-size:12px;color:#000;font-weight:normal;font-family:'Liberation Sans',sans-serif;letter-spacing:0.2px;">project-overview.md</div>
<div class="t" style="left:438.00px;top:270.84px;font-size:12px;color:#5f5f5f;font-weight:normal;font-family:'Liberation Sans',sans-serif;letter-spacing:-0.1px;">2/24/2021 1:19 PM</div>
<div class="t" style="left:582.00px;top:270.84px;font-size:12px;color:#5f5f5f;font-weight:normal;font-family:'Liberation Sans',sans-serif;">MD File</div>
<div class="t" style="left:718px;width:50px;text-align:right;top:270.84px;font-size:12px;letter-spacing:-0.3px;color:#5f5f5f">2 KB</div>
<svg style="left:179px;top:299px" width="14" height="17" viewBox="0 0 14 17"><path d="M1.5 0.5 H9.5 L12.5 3.5 V15.5 H1.5 Z" fill="#fff" stroke="#8a8a8a" stroke-width="1"/><path d="M9.5 0.5 V3.5 H12.5" fill="none" stroke="#8a8a8a" stroke-width="1"/><path d="M3 3.5 H8 M3 5.5 H11 M3 7.5 H11 M3 9.5 H11 M3 11.5 H11 M3 13.5 H11" stroke="#a6a6a6" stroke-width="1"/></svg>
<div class="t" style="left:198.50px;top:301.84px;font-size:12px;color:#000;font-weight:normal;font-family:'Liberation Sans',sans-serif;letter-spacing:0.2px;">readme.md</div>
<div class="t" style="left:438.00px;top:301.84px;font-size:12px;color:#5f5f5f;font-weight:normal;font-family:'Liberation Sans',sans-serif;letter-spacing:-0.1px;">1/27/2021 3:26 PM</div>
<div class="t" style="left:582.00px;top:301.84px;font-size:12px;color:#5f5f5f;font-weight:normal;font-family:'Liberation Sans',sans-serif;">MD File</div>
<div class="t" style="left:718px;width:50px;text-align:right;top:301.84px;font-size:12px;letter-spacing:-0.3px;color:#5f5f5f">1 KB</div>
<svg style="left:179px;top:330px" width="14" height="17" viewBox="0 0 14 17"><path d="M1.5 0.5 H9.5 L12.5 3.5 V15.5 H1.5 Z" fill="#fff" stroke="#8a8a8a" stroke-width="1"/><path d="M9.5 0.5 V3.5 H12.5" fill="none" stroke="#8a8a8a" stroke-width="1"/><path d="M3 3.5 H8 M3 5.5 H11 M3 7.5 H11 M3 9.5 H11 M3 11.5 H11 M3 13.5 H11" stroke="#a6a6a6" stroke-width="1"/></svg>
<div class="t" style="left:198.50px;top:332.84px;font-size:12px;color:#000;font-weight:normal;font-family:'Liberation Sans',sans-serif;letter-spacing:0.2px;">runner-ipc.md</div>
<div class="t" style="left:438.00px;top:332.84px;font-size:12px;color:#5f5f5f;font-weight:normal;font-family:'Liberation Sans',sans-serif;letter-spacing:-0.1px;">2/24/2021 1:19 PM</div>
<div class="t" style="left:582.00px;top:332.84px;font-size:12px;color:#5f5f5f;font-weight:normal;font-family:'Liberation Sans',sans-serif;">MD File</div>
<div class="t" style="left:718px;width:50px;text-align:right;top:332.84px;font-size:12px;letter-spacing:-0.3px;color:#5f5f5f">3 KB</div>
<svg style="left:179px;top:361px" width="14" height="17" viewBox="0 0 14 17"><path d="M1.5 0.5 H9.5 L12.5 3.5 V15.5 H1.5 Z" fill="#fff" stroke="#8a8a8a" stroke-width="1"/><path d="M9.5 0.5 V3.5 H12.5" fill="none" stroke="#8a8a8a" stroke-width="1"/><path d="M3 3.5 H8 M3 5.5 H11 M3 7.5 H11 M3 9.5 H11 M3 11.5 H11 M3 13.5 H11" stroke="#a6a6a6" stroke-width="1"/></svg>
<div class="t" style="left:198.50px;top:363.84px;font-size:12px;color:#000;font-weight:normal;font-family:'Liberation Sans',sans-serif;letter-spacing:0.2px;">settings-utilities.md</div>
<div class="t" style="left:438.00px;top:363.84px;font-size:12px;color:#5f5f5f;font-weight:normal;font-family:'Liberation Sans',sans-serif;letter-spacing:-0.1px;">1/27/2021 3:26 PM</div>
<div class="t" style="left:582.00px;top:363.84px;font-size:12px;color:#5f5f5f;font-weight:normal;font-family:'Liberation Sans',sans-serif;">MD File</div>
<div class="t" style="left:718px;width:50px;text-align:right;top:363.84px;font-size:12px;letter-spacing:-0.3px;color:#5f5f5f">2 KB</div>
<svg style="left:179px;top:392px" width="14" height="17" viewBox="0 0 14 17"><path d="M1.5 0.5 H9.5 L12.5 3.5 V15.5 H1.5 Z" fill="#fff" stroke="#8a8a8a" stroke-width="1"/><path d="M9.5 0.5 V3.5 H12.5" fill="none" stroke="#8a8a8a" stroke-width="1"/><path d="M3 3.5 H8 M3 5.5 H11 M3 7.5 H11 M3 9.5 H11 M3 11.5 H11 M3 13.5 H11" stroke="#a6a6a6" stroke-width="1"/></svg>
<div class="t" style="left:198.50px;top:394.84px;font-size:12px;color:#000;font-weight:normal;font-family:'Liberation Sans',sans-serif;letter-spacing:0.2px;">telemetry.md</div>
<div class="t" style="left:438.00px;top:394.84px;font-size:12px;color:#5f5f5f;font-weight:normal;font-family:'Liberation Sans',sans-serif;letter-spacing:-0.1px;">1/27/2021 3:26 PM</div>
<div class="t" style="left:582.00px;top:394.84px;font-size:12px;color:#5f5f5f;font-weight:normal;font-family:'Liberation Sans',sans-serif;">MD File</div>
<div class="t" style="left:718px;width:50px;text-align:right;top:394.84px;font-size:12px;letter-spacing:-0.3px;color:#5f5f5f">2 KB</div>
<svg style="left:179px;top:423px" width="14" height="17" viewBox="0 0 14 17"><path d="M1.5 0.5 H9.5 L12.5 3.5 V15.5 H1.5 Z" fill="#fff" stroke="#8a8a8a" stroke-width="1"/><path d="M9.5 0.5 V3.5 H12.5" fill="none" stroke="#8a8a8a" stroke-width="1"/><path d="M3 3.5 H8 M3 5.5 H11 M3 7.5 H11 M3 9.5 H11 M3 11.5 H11 M3 13.5 H11" stroke="#a6a6a6" stroke-width="1"/></svg>
<div class="t" style="left:198.50px;top:425.84px;font-size:12px;color:#000;font-weight:normal;font-family:'Liberation Sans',sans-serif;letter-spacing:0.2px;">ui-architecture.md</div>
<div class="t" style="left:438.00px;top:425.84px;font-size:12px;color:#5f5f5f;font-weight:normal;font-family:'Liberation Sans',sans-serif;letter-spacing:-0.1px;">2/24/2021 1:19 PM</div>
<div class="t" style="left:582.00px;top:425.84px;font-size:12px;color:#5f5f5f;font-weight:normal;font-family:'Liberation Sans',sans-serif;">MD File</div>
<div class="t" style="left:718px;width:50px;text-align:right;top:425.84px;font-size:12px;letter-spacing:-0.3px;color:#5f5f5f">2 KB</div>
<svg style="left:179px;top:454px" width="14" height="17" viewBox="0 0 14 17"><path d="M1.5 0.5 H9.5 L12.5 3.5 V15.5 H1.5 Z" fill="#fff" stroke="#8a8a8a" stroke-width="1"/><path d="M9.5 0.5 V3.5 H12.5" fill="none" stroke="#8a8a8a" stroke-width="1"/><path d="M3 3.5 H8 M3 5.5 H11 M3 7.5 H11 M3 9.5 H11 M3 11.5 H11 M3 13.5 H11" stroke="#a6a6a6" stroke-width="1"/></svg>
<div class="t" style="left:198.50px;top:456.84px;font-size:12px;color:#000;font-weight:normal;font-family:'Liberation Sans',sans-serif;letter-spacing:0.2px;">viewmodels.md</div>
<div class="t" style="left:438.00px;top:456.84px;font-size:12px;color:#5f5f5f;font-weight:normal;font-family:'Liberation Sans',sans-serif;letter-spacing:-0.1px;">1/27/2021 3:26 PM</div>
<div class="t" style="left:582.00px;top:456.84px;font-size:12px;color:#5f5f5f;font-weight:normal;font-family:'Liberation Sans',sans-serif;">MD File</div>
<div class="t" style="left:718px;width:50px;text-align:right;top:456.84px;font-size:12px;letter-spacing:-0.3px;color:#5f5f5f">4 KB</div>
<svg style="left:179px;top:485px" width="14" height="17" viewBox="0 0 14 17"><path d="M1.5 0.5 H9.5 L12.5 3.5 V15.5 H1.5 Z" fill="#fff" stroke="#8a8a8a" stroke-width="1"/><path d="M9.5 0.5 V3.5 H12.5" fill="none" stroke="#8a8a8a" stroke-width="1"/><path d="M3 3.5 H8 M3 5.5 H11 M3 7.5 H11 M3 9.5 H11 M3 11.5 H11 M3 13.5 H11" stroke="#a6a6a6" stroke-width="1"/></svg>
<div class="t" style="left:198.50px;top:487.84px;font-size:12px;color:#000;font-weight:normal;font-family:'Liberation Sans',sans-serif;letter-spacing:0.2px;">xaml-island-tweaks.md</div>
<div class="t" style="left:438.00px;top:487.84px;font-size:12px;color:#5f5f5f;font-weight:normal;font-family:'Liberation Sans',sans-serif;letter-spacing:-0.1px;">1/27/2021 3:26 PM</div>
<div class="t" style="left:582.00px;top:487.84px;font-size:12px;color:#5f5f5f;font-weight:normal;font-family:'Liberation Sans',sans-serif;">MD File</div>
<div class="t" style="left:718px;width:50px;text-align:right;top:487.84px;font-size:12px;letter-spacing:-0.3px;color:#5f5f5f">2 KB</div>
<div class="abs" style="left:884px;top:139px;width:1px;height:815px;background:#efefef"></div>
<style>.pv{color:#24292e;-webkit-text-stroke:0.1px #24292e}.cd{font-family:"Liberation Mono",monospace;font-size:12.4px;letter-spacing:0;background:#f3f4f5;border-radius:4px;padding:4.5px 5px 2.5px 5px;margin:0 1px 0 0}.lk{text-decoration:underline;text-decoration-color:#0366d6;text-underline-offset:2px}</style>
<div class="t" style="left:909.00px;top:192.90px;font-size:32px;color:#24292e;font-weight:normal;font-family:'Liberation Sans',sans-serif;letter-spacing:-0.05px;-webkit-text-stroke:1.2px #24292e">Inter-Process</div>
<div class="t" style="left:909.00px;top:232.90px;font-size:32px;color:#24292e;font-weight:normal;font-family:'Liberation Sans',sans-serif;letter-spacing:0.55px;-webkit-text-stroke:1.2px #24292e">Communication with Runner</div>
<div class="abs" style="left:909px;top:276px;width:427px;height:1px;background:#e6e8eb"></div>
<div class="t pv" style="left:909px;top:299.45px;font-size:16px;letter-spacing:-0.2px">The Settings v2 process uses two way IPC to communicate</div>
<div class="t pv" style="left:909px;top:323.45px;font-size:16px;letter-spacing:-0.2px">with the runner process.</div>
<div class="t" style="left:909.00px;top:370.02px;font-size:23px;color:#24292e;font-weight:normal;font-family:'Liberation Sans',sans-serif;letter-spacing:0.95px;-webkit-text-stroke:0.8px #24292e">Initialization</div>
<div class="abs" style="left:909px;top:403px;width:427px;height:1px;background:#e6e8eb"></div>
<div class="abs" style="left:935.5px;top:431px;width:5px;height:5px;border-radius:2.5px;background:#24292e"></div>
<div class="t pv" style="left:949px;top:425.45px;font-size:16px;letter-spacing:-0.14px">On the settings' side, the two way IPC delegates are</div>
<div class="t pv" style="left:949px;top:449.45px;font-size:16px;letter-spacing:-0.1px">contained with the <span class="cd"><span class="lk">ShellPage.xaml.cs</span></span> file. The</div>
<div class="t pv" style="left:949px;top:473.45px;font-size:16px;letter-spacing:-0.08px">delegates are static and the views for all the</div>
<div class="t pv" style="left:949px;top:497.45px;font-size:16px;letter-spacing:-0.08px">powerToys send the ipc information to the</div>
<div class="t pv" style="left:949px;top:521.45px;font-size:16px;letter-spacing:-0.1px">viewmodels as <span class="cd">ShellPage.DefaultSndMSGCallBack</span>.</div>
<div class="abs" style="left:935.5px;top:551px;width:5px;height:5px;border-radius:2.5px;background:#24292e"></div>
<div class="t pv" style="left:949px;top:545.45px;font-size:16px;letter-spacing:-0.08px">These delegates are initialized within the</div>
<div class="t pv" style="left:949px;top:569.45px;font-size:16px;letter-spacing:-0.08px"><span class="cd"><span class="lk">Mainwindow.xaml.cs</span></span> file in the <span class="cd">Settings.Runner</span></div>
<div class="t pv" style="left:949px;top:593.45px;font-size:16px;letter-spacing:-0.1px">project.</div>
<div class="t" style="left:909.00px;top:641.52px;font-size:23px;color:#24292e;font-weight:normal;font-family:'Liberation Sans',sans-serif;letter-spacing:0.33px;-webkit-text-stroke:0.8px #24292e">Types of IPC delegates</div>
<div class="abs" style="left:909px;top:674px;width:427px;height:1px;background:#e6e8eb"></div>
<div class="abs" style="left:935.5px;top:702px;width:5px;height:5px;border-radius:2.5px;background:#24292e"></div>
<div class="t pv" style="left:949px;top:696.45px;font-size:16px;letter-spacing:-0.03px">There are three types of delegates for the settings to</div>
<div class="t pv" style="left:949px;top:720.45px;font-size:16px;letter-spacing:-0.03px">communicate with the runner:</div>
<div class="t" style="left:929.00px;top:760.45px;font-size:16px;color:#24292e;font-weight:normal;font-family:'Liberation Sans',sans-serif;">1.</div>
<div class="t pv" style="left:949px;top:760.45px;font-size:16px;letter-spacing:-0.03px"><span class="cd">SendDefaultMessage</span> - This is used by all the</div>
<div class="t pv" style="left:949px;top:784.45px;font-size:16px;letter-spacing:0px">viewmodels to communicate changes in the UI to the</div>
<div class="t pv" style="left:949px;top:808.45px;font-size:16px;letter-spacing:0px">runner so that the information can be dispatched to</div>
<div class="t pv" style="left:949px;top:832.45px;font-size:16px;letter-spacing:0px">the modules.</div>
<div class="t" style="left:929.00px;top:856.45px;font-size:16px;color:#24292e;font-weight:normal;font-family:'Liberation Sans',sans-serif;">2.</div>
<div class="t pv" style="left:949px;top:856.45px;font-size:16px;letter-spacing:-0.1px"><span class="cd">RestartAsAdmin</span></div>
<div class="t" style="left:929.00px;top:881.45px;font-size:16px;color:#24292e;font-weight:normal;font-family:'Liberation Sans',sans-serif;">3.</div>
<div class="t pv" style="left:949px;top:881.45px;font-size:16px;letter-spacing:-0.1px"><span class="cd">CheckForUpdates</span></div>
<div class="abs" style="left:898px;top:911px;width:460px;height:43px;overflow:hidden">
<div class="t" style="left:11px;top:17.02px;font-size:23px;color:#24292e;letter-spacing:1.05px;-webkit-text-stroke:0.8px #24292e">Sending information to runner</div>
</div>
<div class="abs" style="left:1360px;top:139px;width:16px;height:815px;background:#f0f0f0"></div>
<div class="abs" style="left:1361px;top:173px;width:15px;height:306px;background:#cdcdcd"></div>
<svg style="left:1363px;top:157px" width="11" height="7" viewBox="0 0 11 7"><path d="M0.5 6.2 L5.5 1.2 L10.5 6.2" fill="none" stroke="#5a5a5a" stroke-width="2"/></svg>
<svg style="left:1363px;top:928px" width="11" height="7" viewBox="0 0 11 7"><path d="M0.5 0.8 L5.5 5.8 L10.5 0.8" fill="none" stroke="#5a5a5a" stroke-width="2"/></svg>
<div class="t" style="left:14.00px;top:960.34px;font-size:12px;color:#1a1a1a;font-weight:normal;font-family:'Liberation Sans',sans-serif;">11 items</div>
<div class="abs" style="left:68px;top:960px;width:1px;height:12px;background:#e0e0e0"></div>
<div class="t" style="left:79.00px;top:960.34px;font-size:12px;color:#1a1a1a;font-weight:normal;font-family:'Liberation Sans',sans-serif;letter-spacing:-0.2px;">1 item selected&nbsp;&nbsp;2.64 KB</div>
<div class="abs" style="left:212px;top:960px;width:1px;height:12px;background:#e0e0e0"></div>
<div class="abs" style="left:1329px;top:954px;width:22px;height:23px;background:#cce4f7;border:1px solid #1e90e0"></div>
<svg style="left:1334px;top:960px" width="13" height="11" viewBox="0 0 13 11"><path d="M0 1.5 H12 M0 4.5 H12 M0 7.5 H12 M0 10.5 H12" stroke="#111" stroke-width="1"/></svg>
<svg style="left:1356px;top:959px" width="13" height="13" viewBox="0 0 13 13"><rect x="0.5" y="0.5" width="11" height="9.5" fill="none" stroke="#111" stroke-width="1"/><path d="M0 11.5 H12" stroke="#111" stroke-width="1"/></svg>
</div>
</body></html>
